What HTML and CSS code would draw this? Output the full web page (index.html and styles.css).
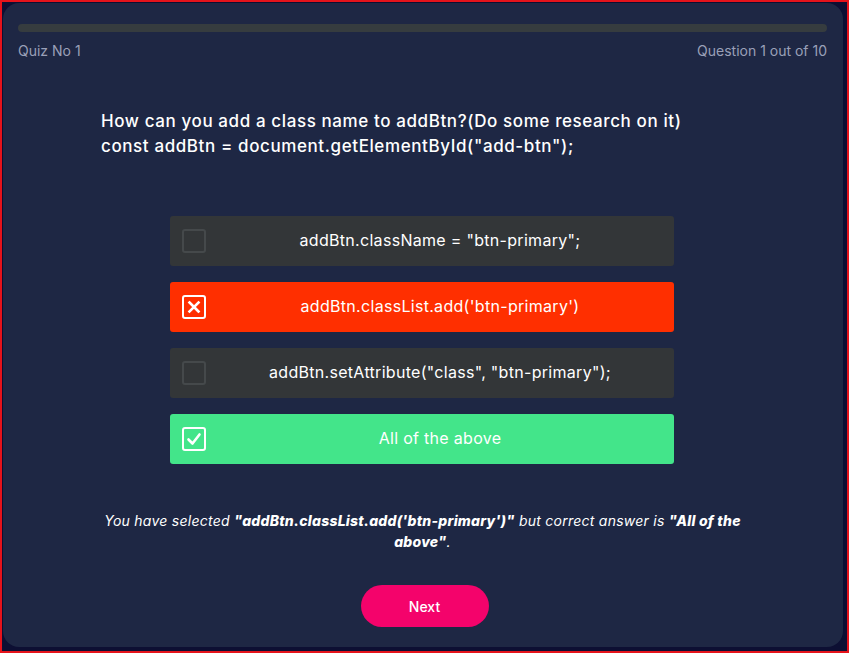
FILE: index.html
```html
<!DOCTYPE html>
<html lang="en">
<head>
<meta charset="utf-8">
<title>Quiz</title>
<link rel="stylesheet" href="styles.css">
</head>
<body>
<div class="frame">
  <main class="card">
    <div class="progress"><div class="progress-fill"></div></div>
    <div class="meta">
      <span>Quiz No 1</span>
      <span>Question 1 out of 10</span>
    </div>
    <h1 class="question">How can you add a class name to addBtn?(Do some research on it)<br>const addBtn = document.getElementById("add-btn");</h1>
    <ul class="options">
      <li class="option">
        <span class="box"></span>
        <span class="label">addBtn.className = "btn-primary";</span>
      </li>
      <li class="option wrong">
        <span class="box"><svg viewBox="0 0 24 24" width="24" height="24"><path d="M7.5 7.5 L16.5 16.5 M16.5 7.5 L7.5 16.5" stroke="#fff" stroke-width="2.6" stroke-linecap="square" fill="none"/></svg></span>
        <span class="label">addBtn.classList.add('btn-primary')</span>
      </li>
      <li class="option">
        <span class="box"></span>
        <span class="label">addBtn.setAttribute("class", "btn-primary");</span>
      </li>
      <li class="option right">
        <span class="box"><svg viewBox="0 0 24 24" width="24" height="24"><path d="M6.5 12.5 L10.5 16.5 L17.5 7.5" stroke="#fff" stroke-width="2.6" stroke-linecap="round" stroke-linejoin="round" fill="none"/></svg></span>
        <span class="label">All of the above</span>
      </li>
    </ul>
    <p class="feedback">You have selected <b>"addBtn.classList.add('btn-primary')"</b> but correct answer is <b>"All of the above"</b>.</p>
    <div class="actions"><button class="next">Next</button></div>
  </main>
</div>
</body>
</html>
```
FILE: styles.css
```css
* { box-sizing: border-box; }
html, body { margin: 0; padding: 0; }
body {
  background: #0d0f33;
  font-family: "Inter", "Open Sans", sans-serif;
}
.frame {
  width: 849px;
  height: 653px;
  border: 2px solid #e5131b;
  padding: 1px 2px 4px 1px;
}
.card {
  height: 644px;
  width: 840px;
  background: #1e2744;
  border-radius: 16px;
  padding: 21px 16px 0 15px;
  display: flex;
  flex-direction: column;
}
.progress {
  height: 8px;
  border-radius: 4px;
  background: #363c3f;
}
.meta {
  display: flex;
  justify-content: space-between;
  margin-top: 10px;
  color: #9aa0b8;
  font-size: 14px;
  line-height: 18px;
}
.question {
  margin: 49px 0 0 83px;
  color: #ffffff;
  font-size: 17px;
  font-weight: 500;
  line-height: 25px;
  letter-spacing: 0.6px;
}
.options {
  list-style: none;
  margin: 57px 0 0 152px;
  padding: 0;
  width: 504px;
  display: flex;
  flex-direction: column;
  gap: 16px;
}
.option {
  height: 50px;
  border-radius: 3px;
  background: #333638;
  display: flex;
  align-items: center;
  padding: 0 0 0 12px;
  color: #ffffff;
  font-size: 16px;
  letter-spacing: 0.3px;
}
.option.wrong { background: #ff2f00; }
.option.right { background: #43e58a; }
.box {
  width: 24px;
  height: 24px;
  flex: none;
  border: 2px solid #45494b;
  border-radius: 3px;
  display: flex;
  align-items: center;
  justify-content: center;
}
.box svg { display: block; flex: none; }
.wrong .box, .right .box { border-color: #ffffff; }
.label {
  flex: 1;
  text-align: center;
  padding-bottom: 2px;
}
.feedback {
  margin: 46px auto 0;
  width: 656px;
  text-align: center;
  color: #ffffff;
  font-style: italic;
  font-size: 14px;
  line-height: 21px;
  letter-spacing: 0.25px;
}
.feedback b { font-weight: 800; }
.actions {
  margin-top: 33px;
  display: flex;
  justify-content: center;
  padding-left: 4px;
}
.next {
  width: 128px;
  height: 42px;
  border: none;
  border-radius: 21px;
  background: #f4036b;
  color: #ffffff;
  font-family: inherit;
  font-size: 14px;
  font-weight: 500;
}
```
